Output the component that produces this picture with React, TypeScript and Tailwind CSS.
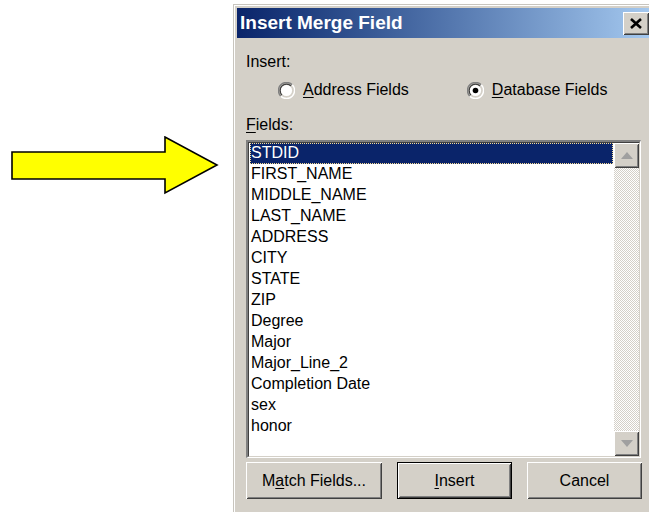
import { useState } from 'react';

const FIELDS = [
  'STDID',
  'FIRST_NAME',
  'MIDDLE_NAME',
  'LAST_NAME',
  'ADDRESS',
  'CITY',
  'STATE',
  'ZIP',
  'Degree',
  'Major',
  'Major_Line_2',
  'Completion Date',
  'sex',
  'honor',
];

const FONT = { fontFamily: '"Liberation Sans", Arial, sans-serif' };

// classic raised 3d edge used by buttons
const RAISED =
  'shadow-[inset_1px_1px_0_#ffffff,inset_-1px_-1px_0_#404040,inset_2px_2px_0_#d4d0c8,inset_-2px_-2px_0_#808080]';

function Radio({ checked }: { checked: boolean }) {
  return (
    <svg width="17" height="17" viewBox="0 0 17 17">
      <circle cx="8.5" cy="8.5" r="8" fill="#d4d0c8" />
      <path d="M2.8 14.2 A8 8 0 0 1 14.2 2.8" stroke="#808080" strokeWidth="1.4" fill="none" />
      <path d="M4 13 A6.3 6.3 0 0 1 13 4" stroke="#404040" strokeWidth="1.4" fill="none" />
      <path d="M14.2 2.8 A8 8 0 0 1 2.8 14.2" stroke="#ffffff" strokeWidth="1.4" fill="none" />
      <circle cx="8.5" cy="8.5" r="5.6" fill="#ffffff" />
      {checked && <circle cx="8.5" cy="8.5" r="2.8" fill="#000000" />}
    </svg>
  );
}

function Arrow() {
  return (
    <svg width="208" height="60" viewBox="0 0 208 60">
      <polygon
        points="1,16 154,16 154,1 206,29 154,57 154,43 1,43"
        fill="#ffff00"
        stroke="#000000"
        strokeWidth="1.6"
        strokeLinejoin="miter"
      />
    </svg>
  );
}

function ScrollButton({ up }: { up: boolean }) {
  return (
    <div className={`w-[25px] h-[25px] bg-[#d4d0c8] flex items-center justify-center ${RAISED}`}>
      <svg width="12" height="7" viewBox="0 0 12 7">
        {up ? (
          <polygon points="0,7 6,0 12,7" fill="#a0a0a0" />
        ) : (
          <polygon points="0,0 6,7 12,0" fill="#a0a0a0" />
        )}
      </svg>
    </div>
  );
}

function Button({ label, mnemonic, width, isDefault }: { label: string; mnemonic?: number; width: string; isDefault?: boolean }) {
  const text =
    mnemonic === undefined ? (
      label
    ) : (
      <>
        {label.slice(0, mnemonic)}
        <span className="underline underline-offset-2">{label[mnemonic]}</span>
        {label.slice(mnemonic + 1)}
      </>
    );
  return (
    <button
      className={`${width} h-[37px] bg-[#d4d0c8] text-[16px] text-black flex items-center justify-center ${
        isDefault ? 'border border-black' : ''
      } ${RAISED}`}
    >
      {text}
    </button>
  );
}

export default function App() {
  const [selected, setSelected] = useState(0);

  return (
    <div className="w-[649px] h-[512px] bg-white flex items-start overflow-hidden" style={FONT}>
      <div className="pl-[11px] pt-[136px] shrink-0">
        <Arrow />
      </div>

      <div className="ml-[14px] mt-[4px] w-[420px] h-[520px] shrink-0 bg-[#d4d0c8] border-l border-t border-[#c8c5be] shadow-[inset_1px_1px_0_#ffffff] p-[3px] pr-0">
        {/* title bar */}
        <div className="h-[30px] bg-gradient-to-r from-[#0a246a] to-[#a6caf0] flex items-center pl-[3px] pr-[4px]">
          <span className="text-white font-bold text-[19px]">Insert Merge Field</span>
          <div className={`ml-auto w-[26px] h-[23px] bg-[#d4d0c8] flex items-center justify-center ${RAISED}`}>
            <svg width="12" height="11" viewBox="0 0 12 11">
              <path d="M1 1 L11 10 M11 1 L1 10" stroke="#000" strokeWidth="2.6" />
            </svg>
          </div>
        </div>

        <div className="pl-[9px] text-[16px] text-black">
          <div className="mt-[14px] h-[20px] leading-[20px]">Insert:</div>

          <div className="mt-[8px] flex items-center h-[20px]">
            <div className="ml-[32px] flex items-center gap-[8px]">
              <Radio checked={false} />
              <span>
                <span className="underline underline-offset-2">A</span>ddress Fields
              </span>
            </div>
            <div className="ml-[58px] flex items-center gap-[8px]">
              <Radio checked={true} />
              <span>
                <span className="underline underline-offset-2">D</span>atabase Fields
              </span>
            </div>
          </div>

          <div className="mt-[15px] h-[20px] leading-[20px]">
            <span className="underline underline-offset-2">F</span>ields:
          </div>

          {/* field list */}
          <div className="mt-[5px] w-[395px] h-[318px] border-t-2 border-l-2 border-t-[#808080] border-l-[#808080] border-b border-r border-b-white border-r-white">
            <div className="h-full border-t border-l border-t-[#404040] border-l-[#404040] border-b border-r border-b-[#d4d0c8] border-r-[#d4d0c8] bg-white flex">
              <div className="flex-1 pl-[1px] pr-[1px]">
                {FIELDS.map((f, i) => (
                  <div
                    key={f}
                    onClick={() => setSelected(i)}
                    className={`h-[21px] leading-[20px] pl-[1px] whitespace-nowrap ${
                      i === selected ? 'bg-[#0a246a] text-white outline-1 outline-dotted outline-[#f5db95] -outline-offset-1' : ''
                    }`}
                  >
                    {f}
                  </div>
                ))}
              </div>
              <div className="w-[25px] flex flex-col bg-[repeating-conic-gradient(#d4d0c8_0_25%,#ffffff_0_50%)] bg-[length:2px_2px]">
                <ScrollButton up={true} />
                <div className="flex-1" />
                <ScrollButton up={false} />
              </div>
            </div>
          </div>

          <div className="mt-[4px] flex gap-[15px]">
            <Button label="Match Fields..." mnemonic={1} width="w-[136px]" />
            <Button label="Insert" mnemonic={0} width="w-[115px]" isDefault />
            <Button label="Cancel" width="w-[115px]" />
          </div>
        </div>
      </div>
    </div>
  );
}
